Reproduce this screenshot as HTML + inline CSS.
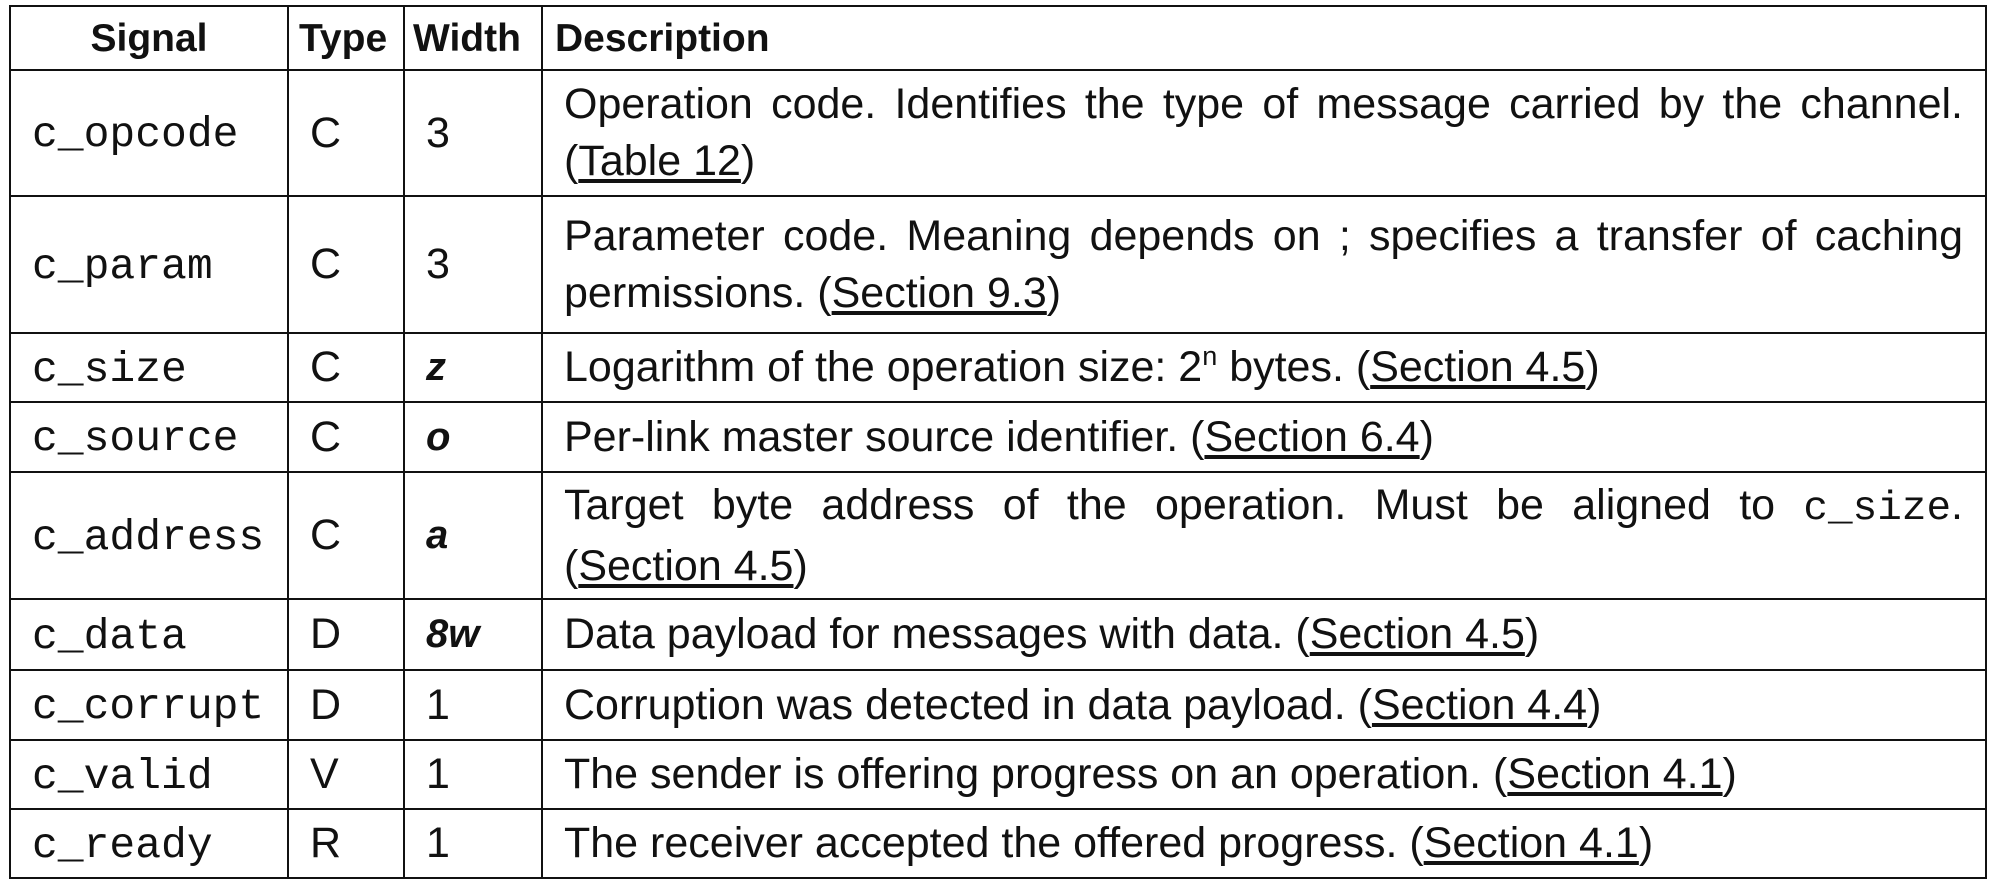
<!DOCTYPE html>
<html><head><meta charset="utf-8"><style>
html,body{margin:0;padding:0;background:#fff;width:1990px;height:890px;overflow:hidden}
table{position:absolute;left:9px;top:5px;width:1978px;border-collapse:collapse;table-layout:fixed;font-family:"Liberation Sans",sans-serif;font-size:43px;color:#111}
td,th{border:2.5px solid #111;padding:0 0 0 21px;vertical-align:middle;line-height:57px;white-space:nowrap}
th{font-weight:bold;text-align:left;font-size:39px;padding-left:12px}
th.c{text-align:center;padding:0}
.m{font-family:"Liberation Mono",monospace;font-size:43px}
td.m{padding-top:3px}
.w{font-weight:bold;font-style:italic;font-size:40px}
td.d{padding-right:22px}
.j{display:block;text-align:justify;text-align-last:justify}
u{text-underline-offset:4px}
sup{font-size:27px;line-height:0;vertical-align:16px}
</style></head><body>
<table>
<colgroup><col style="width:278px"><col style="width:116px"><col style="width:138px"><col></colgroup>
<tr style="height:64px"><th class="c">Signal</th><th style="padding-left:10px">Type</th><th style="padding-left:8px">Width</th><th style="padding-left:12px">Description</th></tr>
<tr style="height:126px"><td class="m">c_opcode</td><td>C</td><td>3</td><td class="d"><span class="j">Operation code. Identifies the type of message carried by the channel.</span>(<u>Table 12</u>)</td></tr>
<tr style="height:137px"><td class="m">c_param</td><td>C</td><td>3</td><td class="d"><span class="j">Parameter code. Meaning depends on ; specifies a transfer of caching</span>permissions. (<u>Section 9.3</u>)</td></tr>
<tr style="height:69px"><td class="m">c_size</td><td>C</td><td class="w">z</td><td>Logarithm of the operation size: 2<sup>n</sup> bytes. (<u>Section 4.5</u>)</td></tr>
<tr style="height:70px"><td class="m">c_source</td><td>C</td><td class="w">o</td><td>Per-link master source identifier. (<u>Section 6.4</u>)</td></tr>
<tr style="height:127px"><td class="m">c_address</td><td>C</td><td class="w">a</td><td class="d"><span class="j">Target byte address of the operation. Must be aligned to <span class="m" style="font-size:41px">c_size</span>.</span>(<u>Section 4.5</u>)</td></tr>
<tr style="height:71px"><td class="m">c_data</td><td>D</td><td class="w">8w</td><td>Data payload for messages with data. (<u>Section 4.5</u>)</td></tr>
<tr style="height:70px"><td class="m">c_corrupt</td><td>D</td><td>1</td><td>Corruption was detected in data payload. (<u>Section 4.4</u>)</td></tr>
<tr style="height:69px"><td class="m">c_valid</td><td>V</td><td>1</td><td>The sender is offering progress on an operation. (<u>Section 4.1</u>)</td></tr>
<tr style="height:69px"><td class="m">c_ready</td><td>R</td><td>1</td><td>The receiver accepted the offered progress. (<u>Section 4.1</u>)</td></tr>
</table>
</body></html>
